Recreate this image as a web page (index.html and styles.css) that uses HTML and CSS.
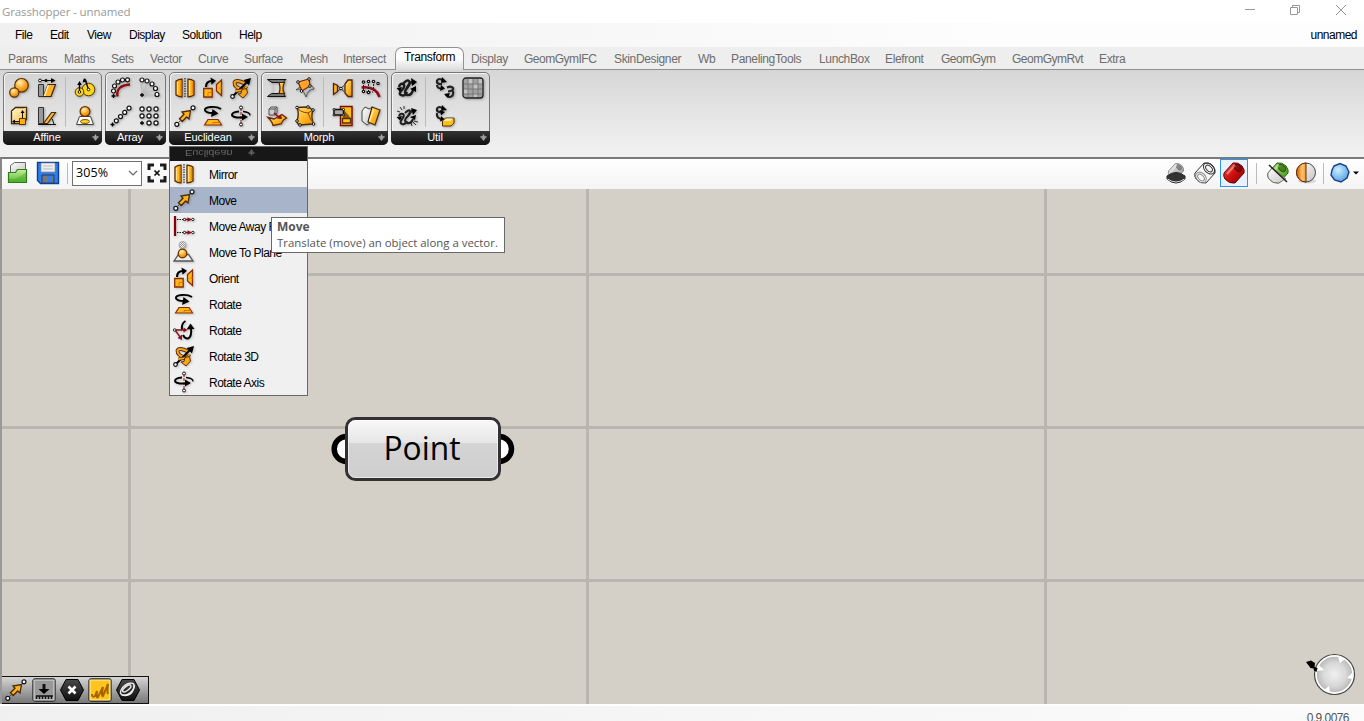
FILE: index.html
```html
<!DOCTYPE html>
<html lang="en">
<head>
<meta charset="utf-8">
<title>Grasshopper - unnamed</title>
<link rel="stylesheet" href="styles.css">
</head>
<body>
<svg class="defs" width="0" height="0" aria-hidden="true">
  <defs>
    <linearGradient id="amber" x1="0" y1="0" x2="1" y2="1"><stop offset="0" stop-color="#ffe08a"/><stop offset=".5" stop-color="#fdb927"/><stop offset="1" stop-color="#f08a00"/></linearGradient>
    <linearGradient id="cream" x1="0" y1="0" x2="1" y2="1"><stop offset="0" stop-color="#fff6d8"/><stop offset="1" stop-color="#fbb93a"/></linearGradient>
    <radialGradient id="ball" cx=".38" cy=".3" r=".75"><stop offset="0" stop-color="#fff0c0"/><stop offset=".5" stop-color="#fbb030"/><stop offset="1" stop-color="#e07800"/></radialGradient>
    <linearGradient id="steel" x1="0" y1="0" x2="1" y2="1"><stop offset="0" stop-color="#fff"/><stop offset="1" stop-color="#858585"/></linearGradient>
    <linearGradient id="redcan" x1="0" y1="0" x2="1" y2="1"><stop offset="0" stop-color="#f4584a"/><stop offset=".5" stop-color="#d01010"/><stop offset="1" stop-color="#7a0000"/></linearGradient>
    <linearGradient id="greencan" x1="0" y1="0" x2="1" y2="1"><stop offset="0" stop-color="#b4ee70"/><stop offset="1" stop-color="#318a08"/></linearGradient>
    <linearGradient id="folder" x1="0" y1="0" x2="0" y2="1"><stop offset="0" stop-color="#c8f09a"/><stop offset="1" stop-color="#57b52e"/></linearGradient>
    <linearGradient id="paper" x1="0" y1="0" x2="1" y2="1"><stop offset="0" stop-color="#fff"/><stop offset="1" stop-color="#c4c4c4"/></linearGradient>
    <linearGradient id="sphere" x1="0" y1="0" x2="1" y2="0"><stop offset="0" stop-color="#c95f00"/><stop offset=".6" stop-color="#ffc46a"/><stop offset="1" stop-color="#f09a30"/></linearGradient>
    <radialGradient id="bluegem" cx=".4" cy=".35" r=".7"><stop offset="0" stop-color="#c9f0ff"/><stop offset="1" stop-color="#529de0"/></radialGradient>
    <linearGradient id="hexdark" x1="0" y1="0" x2="0" y2="1"><stop offset="0" stop-color="#484848"/><stop offset="1" stop-color="#101010"/></linearGradient>
    <radialGradient id="dial"><stop offset="0" stop-color="#f0f0f0"/><stop offset=".6" stop-color="#d8d8d8"/><stop offset="1" stop-color="#b5b5b5"/></radialGradient>
    <pattern id="checker" width="2" height="2" patternUnits="userSpaceOnUse"><rect width="2" height="2" fill="#eee"/><rect width="1" height="1" fill="#999"/><rect x="1" y="1" width="1" height="1" fill="#999"/></pattern>

    <symbol id="scale" viewBox="0 0 24 24"><g fill="url(#ball)" stroke="#553000" stroke-width="1.200"><circle cx="14.500" cy="9.300" r="6.800"/><circle cx="7.300" cy="16.500" r="4.600"/></g></symbol>
    <symbol id="shear" viewBox="0 0 24 24"><path d="M3.500 8.500h5v12h-5z" fill="#999" stroke="#333"/><path d="M13 8.500h7.500l-4.500 12H8.500z" fill="#fdb321" stroke="#402000" stroke-width="1.200"/><path d="m12.600 9-4 11h1.600l4-11z" fill="#fff1b5"/><path d="M4 4.500h14" stroke="#111"/><path d="m16 2 4.500 2.500L16 7z"/><circle cx="5" cy="4.500" r="1.400" fill="#fff" stroke="#111"/><circle cx="11" cy="4.500" r="1.500"/></symbol>
    <symbol id="scale-nu" viewBox="0 0 24 24"><g fill="#ffd51e" stroke="#503800"><circle cx="15.500" cy="13.500" r="6.300"/><circle cx="6.500" cy="16" r="4.300"/></g><path d="M6.500 16V8M15.500 13.500 12 3" stroke="#000" stroke-width="1.300"/><path d="m6.500 5-2.300 4h4.600zM11 2 9.500 6.500l4.500-1z"/><g fill="#fff" stroke="#111"><circle cx="6.500" cy="16" r="1.300"/><circle cx="15.500" cy="13.500" r="1.300"/></g></symbol>
    <symbol id="box-map" viewBox="0 0 24 24"><path d="m4.500 7 4-3.500h11v12l-4 4h-11z" fill="url(#cream)" stroke="#442800" stroke-width="1.300"/><path d="M5 7.500h10M15.500 7l3.500-3" fill="none" stroke="#ffe9b0"/><path d="M7 17.500h6M15.500 8v6" fill="none" stroke="#111"/><path d="m15.500 6-2 3h4zM5 17.500l3-2v4z"/><path d="M12.500 14.500h6v6h-6z" fill="#ffb000" stroke="#553000"/></symbol>
    <symbol id="shear-angle" viewBox="0 0 24 24"><path d="M3.500 3.500h5v16h-5z" fill="#999" stroke="#333"/><path d="M3 20.500h18M14 12q4 2 5 8" fill="none" stroke="#111"/><path d="m8.500 19.500 8-11h4l-8 11z" fill="#fdbb32" stroke="#442800" stroke-width="1.200"/></symbol>
    <symbol id="project" viewBox="0 0 24 24"><path d="M6.500 12.500h11l3 8h-17z" fill="#fff" stroke="#444"/><ellipse cx="12" cy="17.500" rx="4.500" ry="2" fill="#ffd12a" stroke="#765000"/><circle cx="12" cy="7.500" r="4.900" fill="url(#ball)" stroke="#643100" stroke-width="1.200"/></symbol>

    <symbol id="arr-curve" viewBox="0 0 24 24"><path d="M8.500 20.500q-2-11 12.500-12" fill="none" stroke="#900a10" stroke-width="2.400"/><path d="M4.500 18v4M2.500 20h4" stroke="#000" stroke-width="1.300"/><g fill="#fff" stroke="#111" stroke-width="1.200"><circle cx="4.500" cy="15" r="2"/><circle cx="5.500" cy="10" r="2"/><circle cx="9" cy="6" r="2"/><circle cx="13.500" cy="4" r="2"/><circle cx="18.500" cy="3.800" r="2"/></g></symbol>
    <symbol id="arr-polar" viewBox="0 0 24 24"><path d="M5 19 4 6M5 19 10 6M5 19 15 8M5 19 18 13M5 19h15" stroke="#bbb"/><path d="M5 17v4M3 19h4" stroke="#000" stroke-width="1.300"/><g fill="#fff" stroke="#111" stroke-width="1.200"><circle cx="5" cy="4" r="2"/><circle cx="10" cy="5" r="2"/><circle cx="15" cy="8" r="2"/><circle cx="18.500" cy="12.500" r="2"/><circle cx="20" cy="18.500" r="2"/></g></symbol>
    <symbol id="arr-line" viewBox="0 0 24 24"><path d="M3.500 18.500v4M1.500 20.500h4" stroke="#000" stroke-width="1.300"/><g fill="#fff" stroke="#111" stroke-width="1.200"><circle cx="7.300" cy="16.800" r="2"/><circle cx="11.500" cy="12.600" r="2"/><circle cx="15.700" cy="8.400" r="2"/><circle cx="20" cy="4.200" r="2"/></g></symbol>
    <symbol id="arr-grid" viewBox="0 0 24 24"><path d="M5 17v4M3 19h4" stroke="#000" stroke-width="1.300"/><g fill="#fff" stroke="#111" stroke-width="1.200"><circle cx="5" cy="5" r="2.100"/><circle cx="12" cy="5" r="2.100"/><circle cx="19" cy="5" r="2.100"/><circle cx="5" cy="12" r="2.100"/><circle cx="12" cy="12" r="2.100"/><circle cx="19" cy="12" r="2.100"/><circle cx="12" cy="19" r="2.100"/><circle cx="19" cy="19" r="2.100"/></g></symbol>

    <symbol id="mirror" viewBox="0 0 24 24"><path d="M3 5q3-2 6-1.800v17.600Q6 21 3 19zM21 5q-3-2-6-1.800v17.600q3 .2 6-1.800z" fill="#fdb41c" stroke="#5b2800" stroke-width="1.300"/><path d="M4.500 6v12M16.500 4.500v15" stroke="#ffe28a" stroke-width="1.300"/><path d="M7.800 4v16M19.500 6v12" stroke="#f08a00" stroke-width="1.300"/><path d="M12 2v20" stroke="#000" stroke-dasharray="1.500 1"/></symbol>
    <symbol id="orient" viewBox="0 0 24 24"><path d="M2.700 12.500h8.500v8.500H2.700zM20.500 4v15.500l-5-4.500V8.500z" fill="#ffb719" stroke="#8b2d00" stroke-width="1.300"/><path d="M7 16.500h4M7 16.500v4M18 12h3" stroke="#e07a00" fill="none"/><path d="M5 11q0-6 6-6" fill="none" stroke="#000" stroke-width="2.200"/><path d="m9.500 1.500 5.500 3.300-4.500 4z"/></symbol>
    <symbol id="rot3d" viewBox="0 0 24 24"><path d="M15.500 14Q5 12 5.500 6.500 7 3 16 7.500" fill="none" stroke="#5b2c00" stroke-width="3.800"/><path d="M15.500 14Q5 12 5.500 6.500 7 3 16 7.500" fill="none" stroke="#f7a41d" stroke-width="2"/><path d="M3.500 20.500 20 4" stroke="#000" stroke-width="2"/><path d="m22 2-7.500 2 5.500 5.500z"/><path d="M17.500 10.500Q16 14.500 6.500 15" fill="none" stroke="#5b2c00" stroke-width="3.400"/><path d="M17.500 10.500Q16 14.500 6.500 15" fill="none" stroke="#f7a41d" stroke-width="1.800"/><path d="m17.500 12.500 1 4.500-4.500 5-5-4 3-.5 1-4z" fill="#f9a71a" stroke="#5b2c00"/><circle cx="3.500" cy="20.500" r="1.800" fill="#fff" stroke="#111" stroke-width="1.200"/></symbol>
    <symbol id="move" viewBox="0 0 24 24"><path d="M3.800 20.300 20 4" stroke="#444" stroke-dasharray="2 1"/><path d="m6.500 14.800 4.500-4.500-2-2.300 8.500-1.500-1.500 8.500-2.300-2-4.500 4.500z" fill="#fcb21c" stroke="#4a2800" stroke-width="1.300"/><g fill="#fff" stroke="#111" stroke-width="1.200"><circle cx="3.800" cy="20.300" r="2"/><circle cx="20" cy="3.800" r="2"/></g></symbol>
    <symbol id="rotate" viewBox="0 0 24 24"><path d="M20 5Q16 2.500 10 3 3 3.500 4 6.500q2 3 9 2.500" fill="none" stroke="#000" stroke-width="1.900"/><path d="m11.500 5 6 4.500-7.500 3.500z"/><path d="M7 15.500h10l3.500 5.500h-17z" fill="#ffb719" stroke="#8b2d00" stroke-width="1.200"/><path d="M12 21v-2.500h7" fill="none" stroke="#d77000"/></symbol>
    <symbol id="rotaxis" viewBox="0 0 24 24"><path d="M12 4v17" stroke="#9a1020" stroke-dasharray="3 1"/><path d="M10 7.500q-7 .5-7 3.500.500 3 11 2.500" fill="none" stroke="#000" stroke-width="2"/><path d="m13 9.500 6 3.500-6 3.500z"/><path d="M14 7.500q7 .5 7 4" fill="none" stroke="#000" stroke-width="1.300"/><g fill="#fff" stroke="#111"><circle cx="12" cy="3.500" r="1.500"/><circle cx="12" cy="20.500" r="1.500"/></g></symbol>
    <symbol id="moveaway" viewBox="0 0 24 24"><path d="M3 2v20" stroke="#88000a" stroke-width="2.200"/><path d="M5 5.500h7M5 18.500h7" stroke="#111" stroke-dasharray="1.500 1"/><path d="M13 5.500h6M13 18.500h6" stroke="#900a18" stroke-width="1.300"/><path d="m15.500 3.300 4 2.200-4 2.200zM15.500 16.300l4 2.200-4 2.200z" fill="#900a18"/><g fill="#fff" stroke="#111"><circle cx="12.500" cy="5.500" r="1.200"/><circle cx="20.800" cy="5.500" r="1.200"/><circle cx="12.500" cy="18.500" r="1.200"/><circle cx="20.800" cy="18.500" r="1.200"/></g></symbol>
    <symbol id="moveplane" viewBox="0 0 24 24"><path d="M6.500 14.500h10l4.500 6.500H2z" fill="#eee" stroke="#555" stroke-width="1.300"/><circle cx="10.500" cy="5" r="3.500" fill="url(#checker)" stroke="#aaa"/><circle cx="10.500" cy="13.500" r="4.300" fill="url(#ball)" stroke="#643100" stroke-width="1.200"/></symbol>
    <symbol id="rotdir" viewBox="0 0 24 24"><path d="M13.500 3Q9 5.500 10 12M11 17q2 4 5 3.500 4-1.500 3-10.500" fill="none" stroke="#000" stroke-width="2"/><path d="m14.500 11.500 4-6 4 5.500z"/><path d="M3 12h9M3 12l5 7" stroke="#8b1020" stroke-width="1.300"/><path d="m11.500 9.500 4 2.500-4 2.500zM10 16.500V22l-4.500-2z" fill="#8b1020"/><circle cx="2.700" cy="12" r="1.300" fill="#fff" stroke="#222"/></symbol>

    <symbol id="bend" viewBox="0 0 24 24"><path d="M2.500 3.500h18.500l-3 3H7zM2.500 20.500l4-3h12l2 3z" fill="#777" stroke="#111"/><path d="M14 6.500h5.500q-3 5.500 0 11H14q2-5.500 0-11z" fill="url(#amber)" stroke="#442800" stroke-width="1.200"/><path d="M5 6q5 5.500 1 11" fill="none" stroke="#ccc"/></symbol>
    <symbol id="blend" viewBox="0 0 24 24"><path d="M3 14q6-4 10 7 2-8 8-8-2-5-7-5-5 0-11 6z" fill="#bdbdbd" stroke="#555"/><path d="m5 6 11-3 1 7-8 5z" fill="#ffa32d" stroke="#6b2700" stroke-width="1.200"/><g fill="#fff" stroke="#111"><circle cx="5" cy="6" r="1.300"/><circle cx="16" cy="3" r="1.300"/><circle cx="17" cy="10" r="1.300"/><circle cx="8.500" cy="15" r="1.300"/></g></symbol>
    <symbol id="flow" viewBox="0 0 24 24"><path d="m4 5 2-2h6v6l-2 2H4zM10 5l2-2M4 5h6v6" fill="#ccc" stroke="#555"/><path d="m3 13.500 6 1.500 8-4.500 4.500 3.500-3 2L16 20l-8 1.500Q7.500 18 3 13.500z" fill="url(#amber)" stroke="#6b2700" stroke-width="1.300"/><path d="m9 9 6 5" stroke="#8a0b10" fill="none" stroke-width="1.600"/><path d="m16 10.500 1 4.500-5-.5z" fill="#8a0b10"/></symbol>
    <symbol id="cage" viewBox="0 0 24 24"><path d="m4 3.500 11-.5 5 3q-2.500 6 .500 14L7 21q-3-1-3-4 2.500-7 0-13.500z" fill="url(#amber)" stroke="#442800" stroke-width="1.300"/><path d="M4 3q2 5 11 6 2 6 6 11M15 9l5-3" fill="none" stroke="#854600"/><g fill="#fff" stroke="#111"><circle cx="4" cy="3.500" r="1.300"/><circle cx="15" cy="3" r="1.300"/><circle cx="20" cy="6" r="1.300"/><circle cx="4" cy="17" r="1.300"/><circle cx="7" cy="21" r="1.300"/><circle cx="20.500" cy="20" r="1.300"/></g></symbol>
    <symbol id="mirrorc" viewBox="0 0 24 24"><path d="m2.500 7.500 4 2v6l-4 3z" fill="#ffb52a" stroke="#55210d" stroke-width="1.300"/><path d="m14 8 3-4h4v16.500h-4L14 17z" fill="url(#amber)" stroke="#55210d" stroke-width="1.300"/><path d="m6.500 9.500 7 6.500M6.500 15.500 13.500 9" stroke="#333"/><circle cx="10" cy="12.500" r="1.300" fill="#fff" stroke="#111"/></symbol>
    <symbol id="splinem" viewBox="0 0 24 24"><path d="M2.500 11.500Q17 10 20.500 21" fill="none" stroke="#930a18" stroke-width="2.500"/><path d="M4.500 6v9M9.500 5v11M14.500 5v10M4 16h10" stroke="#222" fill="none" stroke-dasharray="2 1"/><g fill="#fff" stroke="#111" stroke-width="1.200"><circle cx="4.500" cy="6" r="1.200"/><circle cx="9.500" cy="5.500" r="1.200"/><circle cx="4.500" cy="15.500" r="1.200"/><circle cx="9.500" cy="16.500" r="1.200"/><circle cx="14.500" cy="5.500" r="1.200"/><circle cx="19" cy="7.500" r="1.200"/></g></symbol>
    <symbol id="mapsrf" viewBox="0 0 24 24"><path d="M9.500 2.500H21V21.500H9.500z" fill="#ffbd16" stroke="#77120b" stroke-width="1.500"/><path d="M13 6l6 7v1h-7v-3z" fill="#8b5c13"/><path d="M11.500 14.500h8v4.500h-8z" fill="#ffc51e" stroke="#5b2c00" stroke-width="1.300"/><path d="M3 5.500h9.500V11H3z" fill="#aaa" stroke="#111" stroke-width="1.500"/><g fill="#fff" stroke="#111"><circle cx="3" cy="5.500" r="1"/><circle cx="12.500" cy="5.500" r="1"/><circle cx="3" cy="11" r="1"/><circle cx="12.500" cy="11" r="1"/></g></symbol>
    <symbol id="twisted" viewBox="0 0 24 24"><path d="m3 7 3-4 4 2 4-2-2 15-4 3-5-4z" fill="url(#paper)" stroke="#444"/><path d="m13 3 8 3-5 15-7-3z" fill="url(#amber)" stroke="#442800" stroke-width="1.200"/><path d="m14.500 5.500-4 12" fill="none" stroke="#ffe9b0" stroke-width="1.500"/></symbol>
    <symbol id="group" viewBox="0 0 24 24"><g fill="none" stroke="#1a1a1a" stroke-width="2.400"><path d="M4 11q1-4 4-3 3 2-1 6t-1 5q4 2 6-3"/><path d="M8 8q4-5 6-3 2 2-2 7t0 7q4 1 6-5"/><path d="M12 12q3-7 7-6"/></g><path d="m16 2 6 4-5 4zM1.500 12l5.500-1-2 5zM15 13l6-3 0 6z"/></symbol>
    <symbol id="ungroup" viewBox="0 0 24 24"><g fill="none" stroke="#222" stroke-width="2.100"><path d="M4 12q1-3 4-2 2 1-1 5t0 5q3 1 5-3"/><path d="M10 9q4-4 5-2t-3 6 0 6q4 1 6-4"/><path d="M13 12q3-6 6-5"/></g><path d="m16 4 6 2-4 5zM1.500 13l5.500-1-2 4.500zM15 13l6-2-1 5z"/><path d="m2 7 3 1M5 3l2 3M9 2v3M16 19l1 3M18 18l3 3M19 17l4 1" stroke="#333"/></symbol>
    <symbol id="merge" viewBox="0 0 24 24"><g fill="none" stroke="#222" stroke-width="2.200"><path d="M10 4.500Q6 1.500 4 4.500 3 8.500 9 8"/><path d="M4 9q0 4 6 3.500"/><path d="M14 11.500q4-2 6 .5 1 3-5 3.500"/><path d="M20 15q1 5-3 6-3 0-4-3"/></g><path d="m9 1 5 5-6 1zM8 9l4 3.500-5 2.500zM11 18l6-1-2 5z"/></symbol>
    <symbol id="split" viewBox="0 0 24 24"><g fill="none" stroke="#222" stroke-width="2.200"><path d="M10 4.500Q6 1.500 4 4.500 3 8.500 9 8"/><path d="M4 9q-1 6 6 6"/></g><path d="m9 1 5 5-6 1zM7 6l5 2-4 3.500zM8 12l4 3.500-5 2z"/><path d="m9.500 17 3-3H21v5l-3 3H9.500z" fill="#ffbd16" stroke="#553000"/><path d="m10.500 17 3-2.500H20L17.500 17z" fill="#fff0bd"/></symbol>
    <symbol id="trace" viewBox="0 0 24 24"><rect x="2" y="2" width="20" height="20" rx="3" fill="#a2a2a2" stroke="#222" stroke-width="1.300"/><path d="M7 3h5v5H7zM12 8h5v5h-5zM3 13h4v5H3zM17 3h4v5h-4zM12 18h5v3h-5z" fill="#c2c2c2"/><path d="M7 3v18M12 3v18M17 3v18M3 8h18M3 13h18M3 18h18" stroke="#777"/></symbol>
    <symbol id="plus" viewBox="0 0 8 8"><path d="M4 .500v6M.500 3.500h7" stroke="#aaa" stroke-width="1.700"/><path d="m1.500 4.500 2.500 3.500 2.500-3.500z" fill="#999"/></symbol>
    <symbol id="can" viewBox="0 0 24 24"><path d="m2 12 9-10q5-1 9 3 3 4 2 7l-9 10Q7 23 3 18q-2-3-1-6z"/><ellipse cx="16" cy="7" rx="4.200" ry="2.800" transform="rotate(42 16 7)" fill="#0005"/><path d="m5 13 8-9" stroke="#fff6" stroke-width="2"/></symbol>
  </defs>
</svg>

<div class="app">
  <header class="titlebar">
    <span class="title">Grasshopper - unnamed</span>
    <svg class="winbtns" width="104" height="12" fill="none" stroke="#999"><path d="M0 5.500h10M45.500 3.500h7v7h-7zM47.500 3.500v-2h7v7h-2M91 1l10 10M101 1 91 11"/></svg>
  </header>
  <nav class="menubar">
    <span>File</span><span>Edit</span><span>View</span><span>Display</span><span>Solution</span><span>Help</span><span class="doc">unnamed</span>
  </nav>
  <nav class="tabs">
    <span>Params</span><span>Maths</span><span>Sets</span><span>Vector</span><span>Curve</span><span>Surface</span><span>Mesh</span><span>Intersect</span><span class="active">Transform</span><span>Display</span><span class="wide">GeomGymIFC</span><span>SkinDesigner</span><span>Wb</span><span>PanelingTools</span><span>LunchBox</span><span>Elefront</span><span class="wide">GeomGym</span><span class="wide">GeomGymRvt</span><span>Extra</span>
  </nav>

  <section class="ribbon">
    <div class="panel affine">
      <div class="icons">
        <div class="pair"><svg><use href="#scale"/></svg><svg><use href="#shear"/></svg><svg><use href="#box-map"/></svg><svg><use href="#shear-angle"/></svg></div>
        <i class="split"></i>
        <div class="pair one"><svg><use href="#scale-nu"/></svg><svg><use href="#project"/></svg></div>
      </div>
      <div class="label">Affine<svg class="plus"><use href="#plus"/></svg></div>
    </div>
    <div class="panel array">
      <div class="icons">
        <div class="pair"><svg><use href="#arr-curve"/></svg><svg><use href="#arr-polar"/></svg><svg><use href="#arr-line"/></svg><svg><use href="#arr-grid"/></svg></div>
      </div>
      <div class="label">Array<svg class="plus"><use href="#plus"/></svg></div>
    </div>
    <div class="panel euclid">
      <div class="icons">
        <div class="pair three"><svg><use href="#mirror"/></svg><svg><use href="#orient"/></svg><svg><use href="#rot3d"/></svg><svg><use href="#move"/></svg><svg><use href="#rotate"/></svg><svg><use href="#rotaxis"/></svg></div>
      </div>
      <div class="label">Euclidean<svg class="plus"><use href="#plus"/></svg></div>
      <div class="dropdown">
        <div class="reflect"><span>Euclidean</span><svg class="plus"><use href="#plus"/></svg></div>
        <div class="item"><svg><use href="#mirror"/></svg>Mirror</div>
        <div class="item hot"><svg><use href="#move"/></svg>Move</div>
        <div class="item"><svg><use href="#moveaway"/></svg>Move Away From</div>
        <div class="item"><svg><use href="#moveplane"/></svg>Move To Plane</div>
        <div class="item"><svg><use href="#orient"/></svg>Orient</div>
        <div class="item"><svg><use href="#rotate"/></svg>Rotate</div>
        <div class="item"><svg><use href="#rotdir"/></svg>Rotate</div>
        <div class="item"><svg><use href="#rot3d"/></svg>Rotate 3D</div>
        <div class="item"><svg><use href="#rotaxis"/></svg>Rotate Axis</div>
        <div class="tooltip"><b>Move</b><span>Translate (move) an object along a vector.</span></div>
      </div>
    </div>
    <div class="panel morph">
      <div class="icons">
        <div class="pair"><svg><use href="#bend"/></svg><svg><use href="#blend"/></svg><svg><use href="#flow"/></svg><svg><use href="#cage"/></svg></div>
        <i class="split"></i>
        <div class="pair"><svg><use href="#mirrorc"/></svg><svg><use href="#splinem"/></svg><svg><use href="#mapsrf"/></svg><svg><use href="#twisted"/></svg></div>
      </div>
      <div class="label">Morph<svg class="plus"><use href="#plus"/></svg></div>
    </div>
    <div class="panel util">
      <div class="icons">
        <div class="pair one"><svg><use href="#group"/></svg><svg><use href="#ungroup"/></svg></div>
        <i class="split"></i>
        <div class="pair"><svg><use href="#merge"/></svg><svg><use href="#trace"/></svg><svg><use href="#split"/></svg></div>
      </div>
      <div class="label">Util<svg class="plus"><use href="#plus"/></svg></div>
    </div>
  </section>

  <section class="toolbar">
    <svg class="open" width="24" height="24"><path d="M4.500 10V4.500l4-3h11V12h-15z" fill="url(#paper)" stroke="#666"/><path d="M2.500 11.500h7l2-3h9v13h-18z" fill="url(#folder)" stroke="#2e7d1c" stroke-width="1.200"/><path d="M3 18q9 1 17-7v10H3z" fill="#3fa51d" opacity=".4"/></svg>
    <svg class="save" width="24" height="24"><path d="M1.500 1.500h21v21h-18l-3-3z" fill="#2f7fea" stroke="#0c3f99" stroke-width="1.400"/><path d="M5 2h14v9H5z" fill="#eee" stroke="#888" stroke-width=".6"/><path d="M7 5h10M7 8h10" stroke="#bbb"/><path d="M6 14h12v8H6z" fill="#777" stroke="#123b80"/><path d="M12 15h4v6h-4z" fill="#2f7fea"/></svg>
    <i class="rule"></i>
    <div class="zoom"><span>305%</span><svg width="10" height="6" fill="none" stroke="#666" stroke-width="1.200"><path d="m1 1 4 4 4-4"/></svg></div>
    <svg class="extents" width="20" height="20" fill="none"><path d="M7 2H2v5M13 2h5v5M2 13v5h5M18 13v5h-5" stroke="#1c1c1c" stroke-width="3"/><path d="m7.500 7.500 5 5M12.500 7.500l-5 5" stroke="#111" stroke-width="1.700"/></svg>
    <div class="views">
      <svg width="24" height="24"><use href="#can" x="3" y="0" width="18" height="20" fill="url(#steel)" stroke="#777"/><path d="M3 15q9-7 18 0v3q-9 8-18 0z" fill="#333" stroke="#222"/><path d="M3.500 18q8.500 6 17 0" stroke="#ddd" fill="none"/></svg>
      <svg width="24" height="24" fill="none" stroke="#333"><path d="m2 12 9-10q5-1 9 3 3 4 2 7l-9 10Q7 23 3 18q-2-3-1-6z" fill="#f7f7f7"/><ellipse cx="16" cy="7.500" rx="6.500" ry="4.500" transform="rotate(45 16 7.500)"/><ellipse cx="16" cy="7.500" rx="4" ry="2.500" transform="rotate(45 16 7.500)"/><ellipse cx="8" cy="16.500" rx="6" ry="4.500" transform="rotate(45 8 16.500)" stroke="#888"/><ellipse cx="8" cy="16.500" rx="4" ry="2.500" transform="rotate(45 8 16.500)" stroke="#888"/></svg>
      <span class="picked"><svg width="24" height="24"><use href="#can" fill="url(#redcan)" stroke="#650000"/></svg></span>
      <i class="rule"></i>
      <svg width="24" height="24"><use href="#can" fill="url(#greencan)" stroke="#275c0c"/><path d="m2 12 4-5 14 11-1 0-6 4Q7 23 3 18q-2-3-1-6z" fill="url(#paper)" stroke="#777"/><path d="m3 4 18 17" stroke="#222" stroke-width="1.500"/></svg>
      <svg class="shade" width="24" height="24"><ellipse cx="13" cy="20" rx="9" ry="2.500" fill="#0002"/><circle cx="12" cy="11.500" r="9.500" fill="url(#paper)" stroke="#444"/><path d="M12 2a9.500 9.500 0 0 0 0 19z" fill="url(#sphere)" stroke="#6b2700"/></svg>
      <i class="rule second"></i>
      <svg width="24" height="24"><path d="m6 5 6-2.500 6 2.500 3 6-2 6-6 4-6.500-2-3.500-5 1-5z" fill="url(#bluegem)" stroke="#1d3f8b" stroke-width="1.400"/></svg>
      <svg class="caret" width="6" height="4"><path d="M0 .500h6l-3 3z"/></svg>
    </div>
  </section>

  <main class="canvas">
    <svg class="node" width="184" height="66" viewBox="0 0 184 66">
      <defs><linearGradient id="cap" x1="0" y1="0" x2="0" y2="1"><stop offset="0" stop-color="#fafafa"/><stop offset=".4" stop-color="#e5e5e5"/><stop offset=".41" stop-color="#d4d4d4"/><stop offset="1" stop-color="#cecece"/></linearGradient></defs>
      <g fill="#fff" stroke="#000" stroke-width="5.500"><circle cx="15.700" cy="33" r="12.500"/><circle cx="168" cy="33" r="12.500"/></g>
      <rect x="15.500" y="2.500" width="153" height="61" rx="9" fill="url(#cap)" stroke="#333133" stroke-width="3"/>
      <rect x="17.500" y="4.500" width="149" height="57" rx="7" fill="none" stroke="#fff" stroke-opacity=".55"/>
      <text x="52.500" y="43.500" textLength="77" lengthAdjust="spacingAndGlyphs">Point</text>
    </svg>
    <div class="recent">
      <svg><use href="#move"/></svg>
      <svg viewBox="0 0 24 24"><rect x="1" y="1" width="22" height="22" rx="2" fill="#999" stroke="#222" stroke-width="1.300"/><rect x="2" y="2" width="20" height="20" fill="none" stroke="#ddd"/><path d="M12 6v6" stroke="#111" stroke-width="3"/><path d="M4 18h17M4.500 18v3M7.500 18v3M10.500 18v3M13.500 18v3M16.500 18v3M19.500 18v3" stroke="#111" stroke-width="1.300"/><path d="m6.500 11 5.500 5 5.500-5z"/></svg>
      <svg viewBox="0 0 24 24"><path d="M6 1.500h12l5.500 10.500L18 22.500H6L.5 12z" fill="url(#hexdark)" stroke="#000"/><path d="m8.500 8.500 7 7M15.500 8.500l-7 7" stroke="#fff" stroke-width="2.600"/></svg>
      <svg viewBox="0 0 24 24"><rect x="1" y="1" width="22" height="22" rx="2" fill="#ffc51e" stroke="#222" stroke-width="1.300"/><rect x="2" y="2" width="20" height="20" stroke="#fff1a5" fill="none"/><path d="M4 16q0 4 3 2l2-5q-1 8 1 6l5-10q-2 10 0 9l5-12q-1 8 0 10" fill="none" stroke="#a66300" stroke-width="2"/></svg>
      <svg viewBox="0 0 24 24"><path d="M6 1.500h12l5.500 10.500L18 22.500H6L.5 12z" fill="url(#hexdark)" stroke="#000"/><g fill="none" stroke="#eee" stroke-width="1.400" transform="rotate(-38 12 12)"><ellipse cx="12" cy="11" rx="8" ry="4.500"/><ellipse cx="12" cy="10" rx="5" ry="2"/><path d="M4 12q7 9 16 0"/></g></svg>
    </div>
    <svg class="compass" width="52" height="44"><circle cx="29.500" cy="21.500" r="19" fill="url(#dial)" stroke="#fff" stroke-width="2.500"/><circle cx="29.500" cy="21.500" r="20" fill="none" stroke="#444" stroke-width="1.200"/><path d="m33 4 7 2-5 4zM48 26l-1-6-5 5zM25 39l-1-6-5 4zM12 18l2-6 5 5z" fill="#fff"/><path d="m1 9 5-1.500 4 2.500-.5 4 3 1-1 4-2.500-1.500-.5-2-3-.5z"/></svg>
  </main>
  <footer class="status">0.9.0076</footer>
</div>
</body>
</html>
```

FILE: styles.css
```css
* { box-sizing: border-box; }
body {
  margin: 0;
  height: 721px;
  overflow: hidden;
  background: #f0f0f0;
  color: #000;
  font: 12px/14px "Liberation Sans", Arial, sans-serif;
  letter-spacing: -.35px;
}
.defs { position: absolute; }
.app { width: 1364px; height: 721px; overflow: hidden; display: flex; flex-direction: column; }
.app > * { flex: none; }

.titlebar { height: 23px; background: #fff; display: flex; justify-content: space-between; padding: 4px 15px 0 2px; }
.title { font: 11.5px/15px "Open Sans", sans-serif; letter-spacing: -.12px; color: #999; }

.menubar { height: 24px; display: grid; grid-template-columns: 35px 37px 42px 53px 57px 1fr auto; padding: 5px 7px 0 15px; background: linear-gradient(90deg, #f0f0f0, #fdfdfd 75%); letter-spacing: -.5px; }

.tabs {
  height: 23px;
  display: grid;
  grid-template-columns: 56px 47px 39px 48px 46px 56px 43px 52px 76px 53px 90px 84px 33px 88px 66px 56px 71px 87px 50px;
  padding-left: 8px;
  color: #6d6d6d;
  background: #eee;
  border-bottom: 1px solid #919191;
}
.tabs span { padding-top: 5px; }
.tabs .wide { letter-spacing: -.5px; }
.tabs .active {
  height: 23px;
  margin-right: 7px;
  padding: 2px 0 0 8px;
  color: #000;
  border: 1px solid #919191;
  border-bottom: 0;
  border-radius: 7px 7px 0 0;
  background: linear-gradient(#fff, #fff 45%, #dcdcdc);
}

.ribbon { height: 87px; display: flex; gap: 3px; padding: 2px 3px; background: linear-gradient(#d6d6d6, #f0f0f0 78px); align-items: flex-start; }
.panel { position: relative; height: 73px; border: 1px solid #777; border-radius: 5px; background: linear-gradient(#d4d4d4, #ececec); display: flex; flex-direction: column; box-shadow: inset 1px 1px 0 #f5f5f5; }
.affine, .util { width: 99px; }
.array { width: 61px; }
.euclid { width: 89px; }
.morph { width: 127px; }
.icons { height: 58px; padding: 1px; display: flex; }
.pair { display: grid; grid-template-columns: 28px 28px; grid-auto-rows: 28px; place-items: center; }
.pair.one { grid-template-columns: 28px; }
.pair.three { grid-template-columns: 28px 28px 28px; }
.pair svg { width: 24px; height: 24px; filter: drop-shadow(1px 1px 1px #0004); }
.split { width: 10px; margin: 3px 0; border-left: 1px solid #bbb; transform: translateX(4px); }
.label { flex: 1; margin: 0 -1px -1px; border-radius: 0 0 5px 5px; background: linear-gradient(#333, #111); color: #fff; font-size: 11px; letter-spacing: -.1px; line-height: 13px; text-align: center; padding-right: 11px; position: relative; }
.plus { position: absolute; right: 3px; top: 3px; width: 7px; height: 7px; }

.dropdown { position: absolute; left: -1px; top: 73px; width: 139px; height: 250px; z-index: 5; border: 1px solid #686868; background: #f0f0f0; letter-spacing: -.5px; }
.reflect { height: 14px; background: #171717; color: #666; font-size: 11px; line-height: 14px; letter-spacing: -.1px; padding-left: 15px; position: relative; }
.reflect span { display: block; transform: scaleY(-.9); }
.reflect .plus { left: 78px; top: 2px; transform: scaleY(-1); opacity: .5; }
.item { height: 26px; display: flex; align-items: center; gap: 13px; padding: 1px 0 0 2px; white-space: nowrap; overflow: hidden; }
.item svg { width: 24px; height: 24px; flex: none; margin-top: -1px; filter: drop-shadow(1px 1px 1px #0003); }
.hot { background: #a8b4ca; }
.tooltip { position: absolute; left: 101px; top: 70px; width: 234px; height: 36px; background: #fff; border: 1px solid #686868; color: #555; padding: 1px 5px; font: 11.4px/16px "Open Sans", sans-serif; letter-spacing: 0; white-space: nowrap; display: flex; flex-direction: column; }
.tooltip b { font-size: 12px; }

.toolbar { height: 32px; display: flex; align-items: center; padding: 0 4px 0 4px; border-top: 2px solid #7a7a7a; border-left: 2px solid #888; background: linear-gradient(#fff, #f4f4f4); }
.toolbar > * { transform: translateY(-1px); }
.save { margin-left: 6px; }
.rule { width: 1px; height: 21px; background: #bbb; margin: 0 4px 0 7px; }
.zoom { width: 70px; height: 25px; border: 1px solid #707070; background: #fff; display: flex; justify-content: space-between; align-items: center; padding: 0 3px; font: 12.5px/16px "Open Sans", sans-serif; letter-spacing: .1px; }
.extents { margin-left: 5px; }
.views { margin-left: auto; display: flex; align-items: center; gap: 5px; }
.picked { width: 28px; height: 28px; border: 1px solid #3293ef; background: #e8f2fc; padding: 1px; margin: 0 0 0 -2px; }
.picked svg { display: block; }
.views .rule { margin: 0 4px 0 3px; }
.shade { margin-left: -1px; }
.views .rule.second { margin: 0 -1px 0 0; }
.caret { margin: 0 1px 0 -4px; }

.canvas {
  position: relative;
  height: 515px;
  border-left: 2px solid #999;
  background:
    linear-gradient(90deg, #b9b6af 3px, transparent 3px) 126px 0 / 458px 100%,
    linear-gradient(#b9b6af 3px, transparent 3px) 0 84px / 100% 153px,
    #d4d0c8;
}
.node { position: absolute; left: 329px; top: 227px; }
.node text { font: 33px "Open Sans", sans-serif; letter-spacing: 0; fill: #000; }
.recent { position: absolute; left: 0; bottom: 0; width: 147px; height: 28px; display: flex; gap: 4px; padding: 1px 2px; border: 1px solid #111; border-left: 0; background: linear-gradient(#d5d5d5, #777); align-items: center; }
.recent svg { width: 24px; height: 24px; }
.compass { position: absolute; right: 7px; bottom: 7px; }
.status { height: 17px; border-top: 2px solid #fff; padding: 5px 15px 0 0; text-align: right; color: #555; background: linear-gradient(90deg, #f0f0f0, #fbfbfb); letter-spacing: -.55px; }
```
